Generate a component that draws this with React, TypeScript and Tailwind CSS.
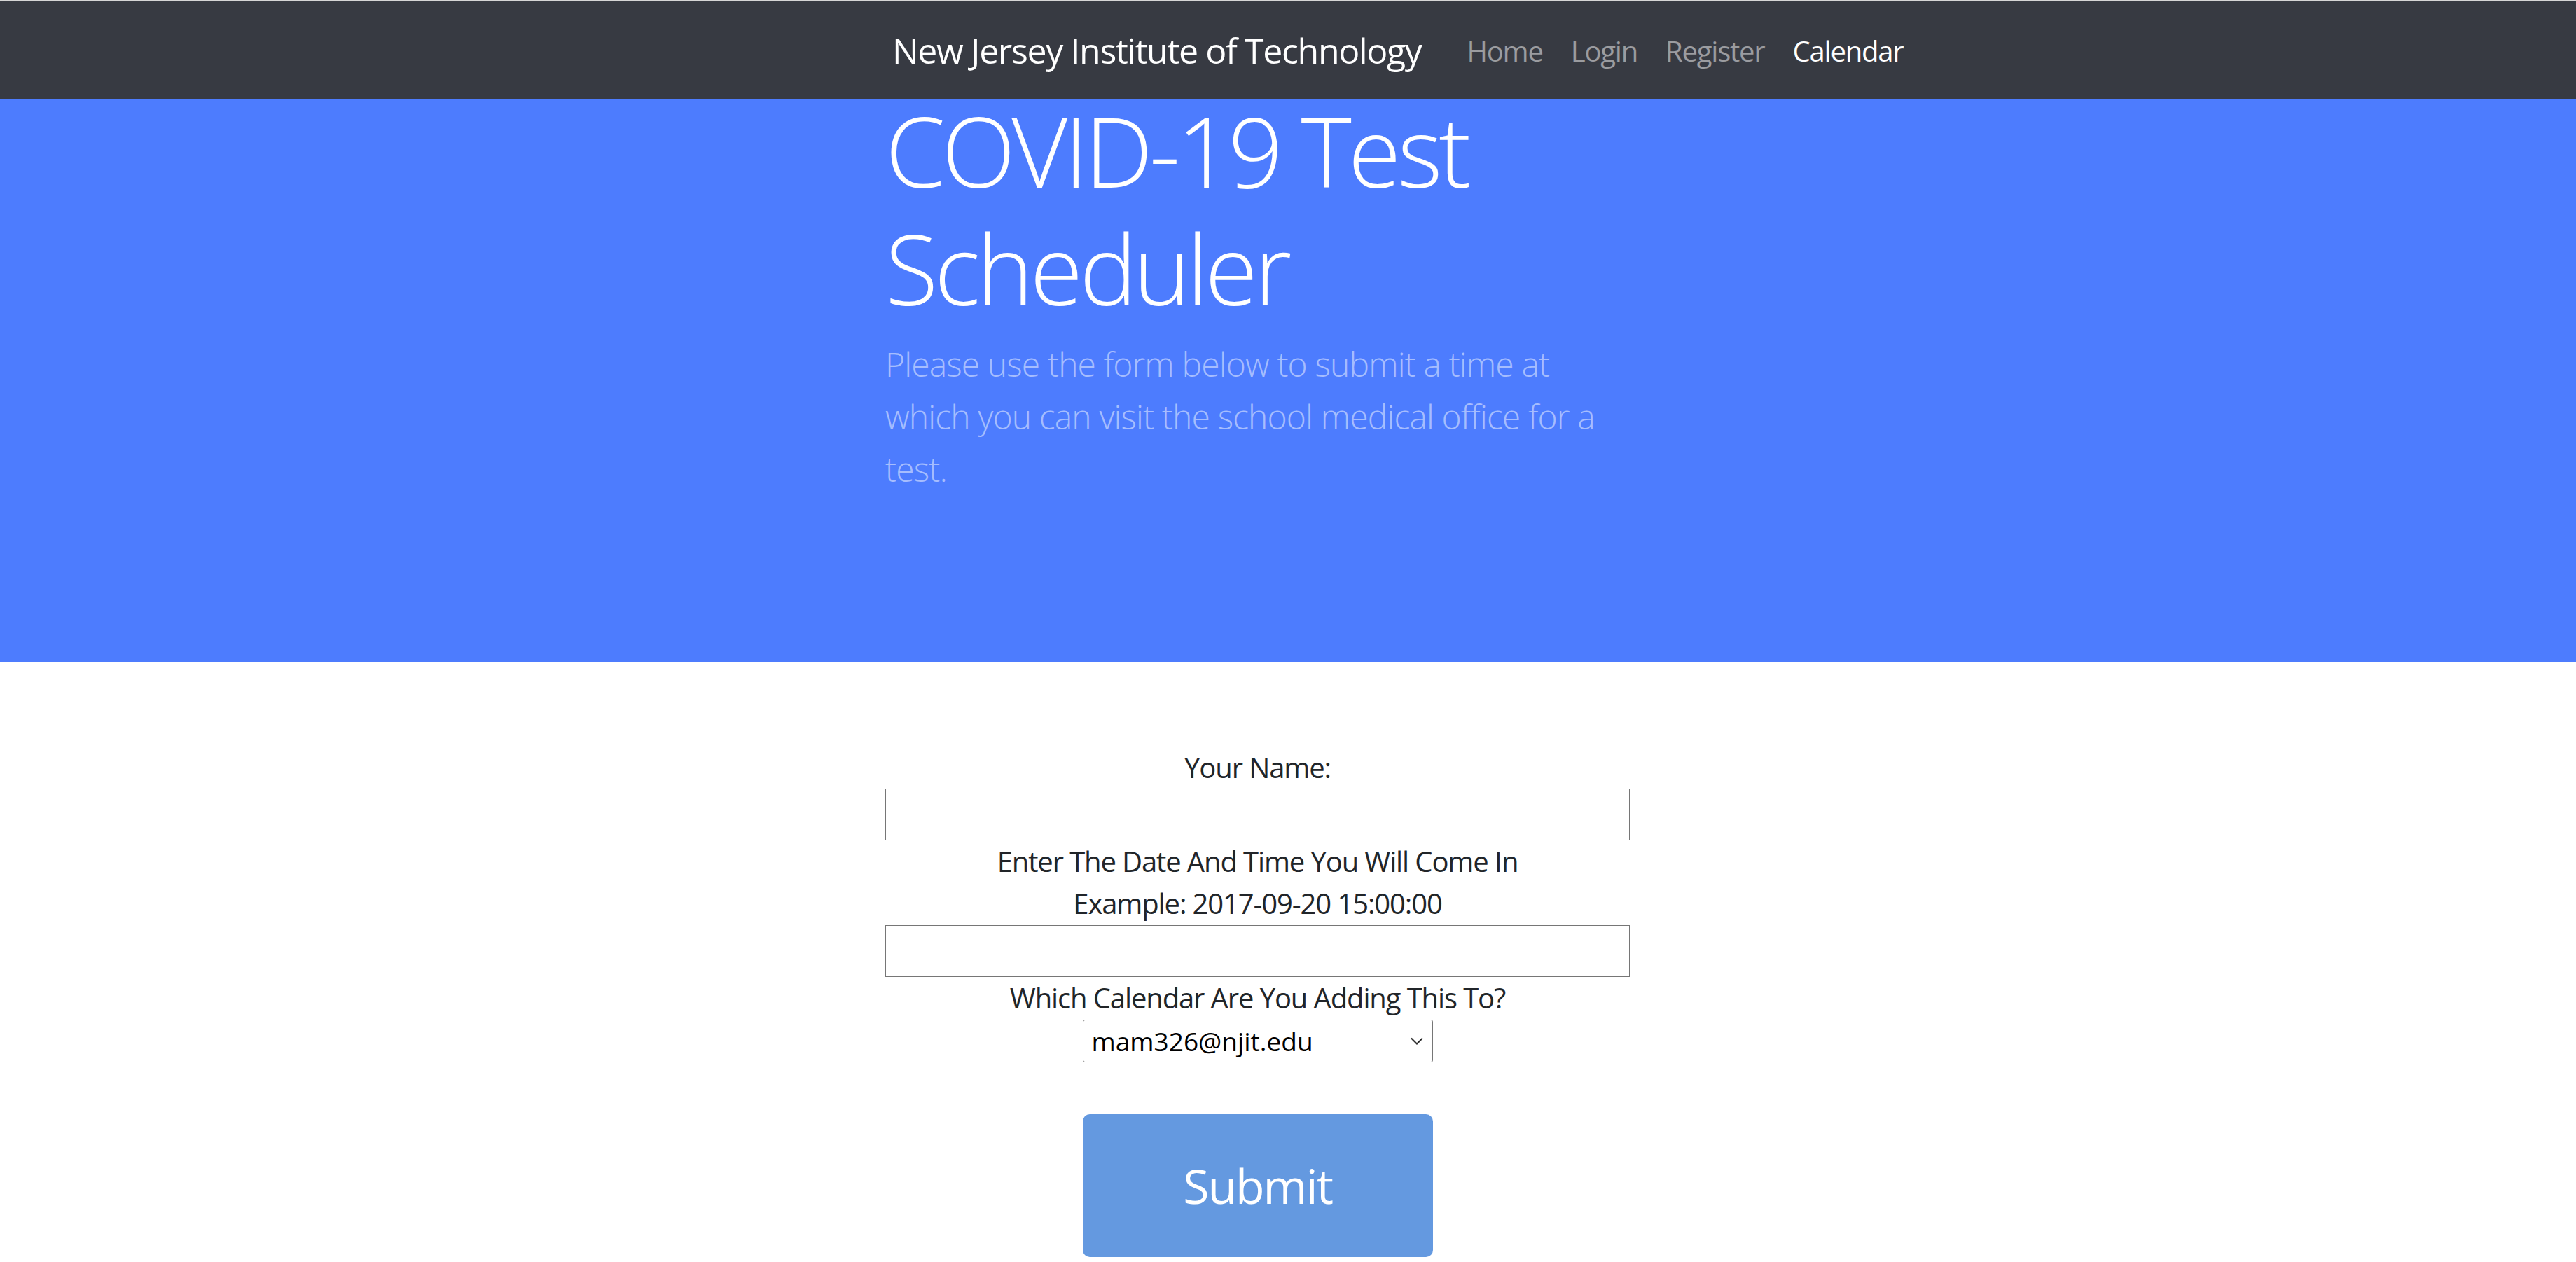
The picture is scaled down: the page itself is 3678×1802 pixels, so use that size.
import React from "react";

const navLinks = [
    { label: "Home", active: false },
    { label: "Login", active: false },
    { label: "Register", active: false },
    { label: "Calendar", active: true },
];

const App = () => {
    return (
        <div className="min-h-screen bg-white font-['Open_Sans','Noto_Sans',sans-serif] tracking-[-0.025em] text-[#212529]">
            <div className="h-px bg-[#d6d6d6]" />
            <nav className="h-[140px] bg-[#373a42]">
                <div className="mx-auto flex h-full w-[1150px] items-center pl-[10px] pt-[3px]">
                    <a href="#" className="mr-[45px] shrink-0 whitespace-nowrap text-[50px] leading-[75px] tracking-[-0.027em] text-white">
                        New Jersey Institute of Technology
                    </a>
                    <ul className="flex shrink-0">
                        {navLinks.map(link => (
                            <li key={link.label}>
                                <a
                                    href="#"
                                    className={
                                        link.active
                                            ? "block whitespace-nowrap px-[20px] text-[40px] leading-[60px] tracking-[-0.03em] text-white"
                                            : "block whitespace-nowrap px-[20px] text-[40px] leading-[60px] tracking-[-0.03em] text-white/50"
                                    }
                                >
                                    {link.label}
                                </a>
                            </li>
                        ))}
                    </ul>
                </div>
            </nav>

            <section className="bg-[#4d7cfe] pb-[238px]">
                <div className="mx-auto flex w-[1150px] flex-col">
                    <h1 className="-mt-[11px] w-[1063px] text-[138px] font-light leading-[168px] tracking-[-0.038em] text-white">
                        COVID-19 Test Scheduler
                    </h1>
                    <p className="mt-[16px] w-[1063px] text-[48px] font-light leading-[75px] tracking-[-0.018em] text-white/50">
                        Please use the form below to submit a time at which you can visit the school medical office for a test.
                    </p>
                </div>
            </section>

            <section className="pt-[121px] pb-[40px]">
                <form className="mx-auto w-[1150px]" onSubmit={e => e.preventDefault()}>
                    <div className="flex w-[1063px] flex-col items-center text-center text-[40px] leading-[60px] tracking-[-0.028em]">
                        <label htmlFor="name">Your Name:</label>
                        <input
                            id="name"
                            type="text"
                            className="h-[74px] w-[1063px] border border-[#767676] bg-white px-3 text-[33px]"
                        />
                        <label htmlFor="when">Enter The Date And Time You Will Come In</label>
                        <span>Example: 2017-09-20 15:00:00</span>
                        <input
                            id="when"
                            type="text"
                            className="mt-px h-[74px] w-[1063px] border border-[#767676] bg-white px-3 text-[33px]"
                        />
                        <label htmlFor="calendar">Which Calendar Are You Adding This To?</label>
                        <div className="relative mt-px w-[500px]">
                            <select
                                id="calendar"
                                className="h-[61px] w-full appearance-none rounded-[3px] border border-[#767676] bg-white pl-[12px] text-left text-[37px] leading-[45px] tracking-normal text-black"
                            >
                                <option>mam326@njit.edu</option>
                            </select>
                            <svg
                                className="pointer-events-none absolute right-[14px] top-[25px]"
                                width="18"
                                height="11"
                                viewBox="0 0 18 11"
                                fill="none"
                            >
                                <path d="M1 1.5L9 9.5L17 1.5" stroke="#2b2b2b" strokeWidth="2" />
                            </svg>
                        </div>
                        <button
                            type="submit"
                            className="mt-[74px] h-[204px] w-[500px] rounded-[10px] bg-[#6499e0] text-[68px] tracking-[-0.03em] text-white"
                        >
                            Submit
                        </button>
                    </div>
                </form>
            </section>
        </div>
    );
};

export default App;
